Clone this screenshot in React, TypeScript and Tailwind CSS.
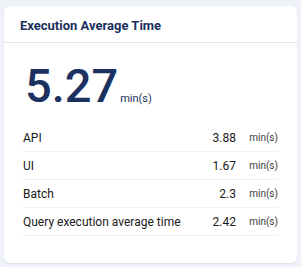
const rows = [
  { label: "API", value: "3.88" },
  { label: "UI", value: "1.67" },
  { label: "Batch", value: "2.3" },
  { label: "Query execution average time", value: "2.42" },
];

export default function App() {
  return (
    <div className="w-[301px] h-[267px] bg-[#eff3f9] pt-[6px] pl-[4px] pr-[4px] font-['Roboto',sans-serif]">
      <div className="h-[257px] bg-white rounded-[6px] shadow-[0_1px_2px_rgba(0,0,0,0.08)]">
        {/* Header */}
        <div className="h-[37px] border-b border-[#e1e4ea] flex items-center px-[16px] pt-[2px]">
          <h2 className="text-[13px] font-bold text-[#1b2f5c] leading-none">Execution Average Time</h2>
        </div>

        {/* Big number */}
        <div className="flex items-baseline pl-[21px] pt-[19px] h-[81px]">
          <span className="text-[47px] leading-none text-[#1b3160] font-medium">5.27</span>
          <span className="text-[11px] text-[#1b3160] ml-[2px]">min(s)</span>
        </div>

        {/* Rows */}
        <div className="px-[19px]">
          {rows.map((row) => (
            <div
              key={row.label}
              className="flex items-center h-[28px] border-b border-dotted border-[#dfe2e8] text-[12px] text-[#1a1a1a]"
            >
              <span className="flex-1">{row.label}</span>
              <span>{row.value}</span>
              <span className="w-[42px] text-right text-[10px] text-[#3a3a3a]">min(s)</span>
            </div>
          ))}
        </div>
      </div>
    </div>
  );
}
